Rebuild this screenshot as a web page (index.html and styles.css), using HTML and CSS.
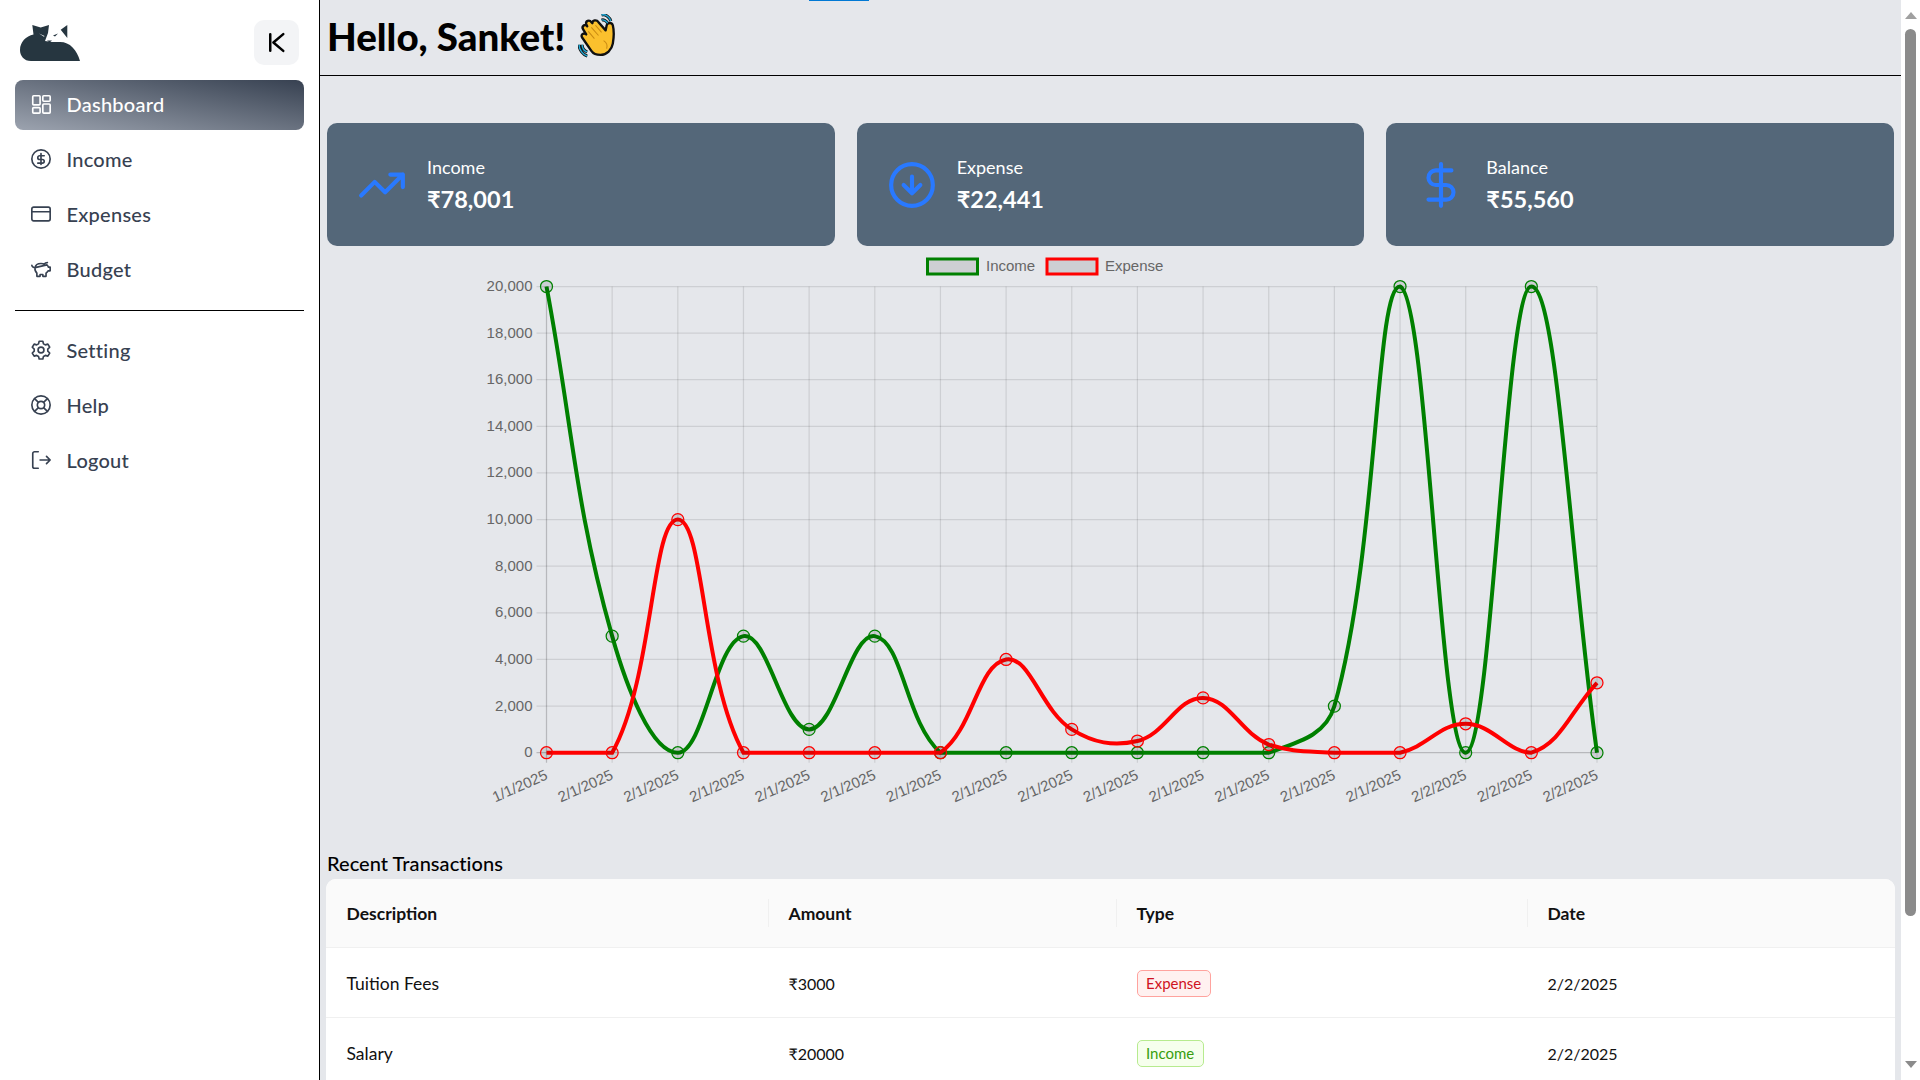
FILE: index.html
```html
<!DOCTYPE html>
<html lang="en">
<head>
<meta charset="utf-8">
<title>Dashboard</title>
<link rel="stylesheet" href="styles.css">
</head>
<body>
<aside class="sidebar">
  <div class="side-top">
    <svg class="logo" viewBox="0 0 60 36" aria-hidden="true">
      <path fill="#263640" d="M12.300 0L20.700 2.500 29 0 28 8 25 16 32 17H40C50 17 57 25 60 36H11C4 36 0 31 0 25 0 17 6 11 13.500 9.500Z"/>
      <path fill="#263640" d="M47.300 0L40.700 4.700 47.300 13ZM33 10.500L38 8.500 35 11.500ZM27 15.500H32L29.500 17.500Z"/>
      <path fill="#fff" d="M19 8.500L24.500 11 24 11.800Z"/>
    </svg>
    <button class="collapse" type="button" aria-label="Collapse">
      <svg class="i24" viewBox="0 0 24 24"><path d="M6 4v16M18.500 4L9 12l9.500 8"/></svg>
    </button>
  </div>
  <nav class="nav">
    <a class="nav-item active"><svg class="nav-icon" viewBox="0 0 24 24"><rect x="3" y="3" width="8" height="10" rx="1"/><rect x="14" y="3" width="8" height="6" rx="1"/><rect x="3" y="16" width="8" height="6" rx="1"/><rect x="14" y="12" width="8" height="10" rx="1"/></svg>Dashboard</a>
    <a class="nav-item"><svg class="nav-icon" viewBox="0 0 24 24"><circle cx="12" cy="12" r="10"/><path d="M15.500 8.500h-5a2 2 0 0 0 0 4h3a2 2 0 0 1 0 4h-5M12 6v12"/></svg>Income</a>
    <a class="nav-item"><svg class="nav-icon" viewBox="0 0 24 24"><rect x="2" y="4.500" width="20" height="15" rx="2"/><path d="M2 9.500h20"/></svg>Expenses</a>
    <a class="nav-item"><svg class="nav-icon" viewBox="0 0 24 24"><path d="M19 5c-1.500 0-2.800.6-3.500 1.500C14.500 6 13.300 6 12 6 9 6 6 7.500 5.500 10.500c-1.500 0-3.500-1-3.500-2.500M5.500 10.500C5 13 6 15 7.500 16.500V20h3.500v-2h3v2h3.500v-3.500c1-.8 1.800-1.700 2.200-2.500H22v-4h-2c-.2-1-.8-2-1.500-2.500z"/></svg>Budget</a>
    <hr class="nav-rule">
    <a class="nav-item"><svg class="nav-icon" viewBox="0 0 24 24"><path d="M10 2.500h4l.7 2.800 2 1.100 2.800-.8 2 3.400-2.100 2 0 2.300 2.100 2-2 3.400-2.800-.8-2 1.100-.7 2.800h-4l-.7-2.800-2-1.100-2.800.8-2-3.400 2.100-2 0-2.300-2.100-2 2-3.400 2.800.8 2-1.100z"/><circle cx="12" cy="12" r="3.200"/></svg>Setting</a>
    <a class="nav-item"><svg class="nav-icon" viewBox="0 0 24 24"><circle cx="12" cy="12" r="10"/><circle cx="12" cy="12" r="4"/><path d="M5 5l4.200 4.200M19 5l-4.200 4.200M5 19l4.200-4.200M19 19l-4.200-4.200"/></svg>Help</a>
    <a class="nav-item"><svg class="nav-icon" viewBox="0 0 24 24"><path d="M9 3H5a2 2 0 0 0-2 2v14a2 2 0 0 0 2 2h4M11 12h11M18 8l4 4-4 4"/></svg>Logout</a>
  </nav>
</aside>

<main class="main">
  <div class="tab-mark"></div>
  <header class="page-head">
    <h1 class="greeting">Hello, Sanket!</h1>
    <svg class="wave" viewBox="7 7 40 44" aria-hidden="true">
      <path fill="#fbc02d" stroke="#111" stroke-width="2.300" stroke-linejoin="round" d="M20 43L11 30c-2-3 2-5 4-3l-3-5c-2-3 2-6 4-3l-1-2c-1-3 3-5 5-2l1 1c0-3 4-4 6-1l7 8 1-5c1-3 5-3 6 0 1 4 1 12 0 18-1 6-6 11-12 11-5 0-7-1-9-4z"/>
      <path fill="none" stroke="#c98a12" stroke-width="1" d="M17 24l6 7M20 20l7 8M24 18l6 7M35 41c1-3 0-6-3-8"/>
      <path fill="none" stroke="#111" stroke-width="3" d="M30 13c2-1 5 1 6 3M30 8c4-1 8 2 9 6M11 37c0 3 2 6 5 7M8 37c0 5 4 10 8 11"/>
      <path fill="none" stroke="#23a9d6" stroke-width="1.400" d="M30 13c2-1 5 1 6 3M30 8c4-1 8 2 9 6M11 37c0 3 2 6 5 7M8 37c0 5 4 10 8 11"/>
    </svg>
  </header>

  <section class="cards">
    <article class="card">
      <svg class="card-icon" viewBox="0 0 24 24"><path d="M22 7l-8.500 8.500-5-5L2 17M16 7h6v6"/></svg>
      <div class="card-text"><span class="card-label">Income</span><strong class="card-value">₹78,001</strong></div>
    </article>
    <article class="card">
      <svg class="card-icon" viewBox="0 0 24 24"><circle cx="12" cy="12" r="10"/><path d="M8 12l4 4 4-4M12 8v8"/></svg>
      <div class="card-text"><span class="card-label">Expense</span><strong class="card-value">₹22,441</strong></div>
    </article>
    <article class="card">
      <svg class="card-icon" viewBox="0 0 24 24"><path d="M12 2v20M17 5H9.500a3.500 3.500 0 0 0 0 7h5a3.500 3.500 0 0 1 0 7H6"/></svg>
      <div class="card-text"><span class="card-label">Balance</span><strong class="card-value">₹55,560</strong></div>
    </article>
  </section>

  <div class="chart-wrap"><svg id="chart" class="chart" width="1574" height="590" viewBox="0 0 1574 590"></svg></div>

  <h2 class="section-title">Recent Transactions</h2>
  <div class="table-wrap">
    <table class="table">
      <colgroup><col class="c1"><col class="c2"><col class="c3"><col class="c4"></colgroup>
      <thead><tr><th>Description</th><th>Amount</th><th>Type</th><th>Date</th></tr></thead>
      <tbody>
        <tr><td>Tuition Fees</td><td class="num">₹3000</td><td><span class="tag tag-exp">Expense</span></td><td class="num">2/2/2025</td></tr>
        <tr><td>Salary</td><td class="num">₹20000</td><td><span class="tag tag-inc">Income</span></td><td class="num">2/2/2025</td></tr>
      </tbody>
    </table>
  </div>
</main>

<div class="scrollbar" aria-hidden="true">
  <span class="arrow-up"></span>
  <span class="thumb"></span>
  <span class="arrow-down"></span>
</div>
<script src="chart.js"></script>
</body>
</html>
```
FILE: styles.css
```css
* { box-sizing: border-box; }
html, body { height: 100%; margin: 0; }
body {
  display: flex;
  overflow: hidden;
  background: #fff;
  font-family: Lato, "Noto Sans", "Liberation Sans", sans-serif;
  color: #111;
}
.sidebar {
  flex: 0 0 320px;
  height: 1080px;
  padding: 20px 15px 0 15px;
  background: #fff;
  border-right: 1px solid #000;
}
.side-top {
  display: flex;
  justify-content: space-between;
  align-items: center;
  height: 45px;
  padding: 0 5px;
}
.logo { width: 60px; height: 36px; margin-top: 1px; }
.collapse {
  display: flex;
  align-items: center;
  justify-content: center;
  width: 45px;
  height: 45px;
  padding: 0;
  border: 0;
  border-radius: 10px;
  background: #f3f4f6;
}
.i24 { width: 25px; height: 25px; fill: none; stroke: #000; stroke-width: 2.400; stroke-linecap: round; stroke-linejoin: round; }
.nav { display: flex; flex-direction: column; gap: 5px; margin-top: 15px; }
.nav-item {
  display: flex;
  align-items: center;
  gap: 14.500px;
  height: 50px;
  padding: 0 0 2px 15px;
  border-radius: 8px;
  font-size: 20px;
  font-weight: 500;
  letter-spacing: 0.25px;
  color: #374151;
}
.nav-item.active {
  background: linear-gradient(to top right, #9ca3af, #374151);
  color: #fff;
}
.nav-icon { flex: none; width: 22px; height: 22px; fill: none; stroke: currentColor; stroke-width: 1.800; stroke-linecap: round; stroke-linejoin: round; }
.nav-rule { width: 100%; height: 1px; margin: 10px 0 10px; border: 0; background: #000; }

.main {
  position: relative;
  flex: 0 0 1581px;
  height: 1080px;
  padding: 0 7px;
  overflow: hidden;
  background: #e5e7eb;
}
.tab-mark { position: absolute; left: 489px; top: 0; width: 60px; height: 1px; background: #0078d4; }
.page-head {
  display: flex;
  align-items: center;
  gap: 13px;
  height: 76px;
  margin: 0 -7px;
  padding: 0 7px 2px 7px;
  border-bottom: 1px solid #000;
}
.greeting { margin: 0; font-size: 38.500px; font-weight: 900; line-height: 1; color: #000; }
.wave { width: 41px; height: 45px; }
.cards {
  display: grid;
  grid-template-columns: repeat(3, 1fr);
  gap: 22px;
  margin-top: 47px;
}
.card {
  display: flex;
  align-items: center;
  gap: 20px;
  height: 123px;
  padding-left: 30px;
  border-radius: 10px;
  background: #546779;
  color: #fff;
}
.card-icon { flex: none; width: 50px; height: 50px; fill: none; stroke: #2979ff; stroke-width: 2; stroke-linecap: round; stroke-linejoin: round; }
.card-text { display: flex; flex-direction: column; gap: 4px; }
.card-label { font-size: 18px; line-height: 24px; }
.card-value { font-size: 23.500px; line-height: 32px; font-weight: 700; }
.chart-wrap { height: 590px; margin-top: 4px; }
.chart { display: block; }
.chart text { font-family: "Liberation Sans", Arial, sans-serif; font-size: 15px; fill: #666; }
.section-title { margin: 8px 0 0; font-size: 20px; font-weight: 500; line-height: 30px; letter-spacing: 0.05px; color: #000; }
.table-wrap {
  width: 1569px;
  margin: 1px 0 0 -1px;
  border-radius: 10px 10px 0 0;
  overflow: hidden;
  background: #fff;
}
.table { width: 100%; table-layout: fixed; border-collapse: collapse; font-size: 17.500px; }
.c1 { width: 442px; }
.c2 { width: 348px; }
.c3 { width: 411px; }
.c4 { width: 368px; }
.table th {
  position: relative;
  height: 68px;
  padding: 1px 20px 0 20.500px;
  text-align: left;
  font-weight: 700;
  background: #fafafa;
  border-bottom: 1px solid #f0f0f0;
}
.table th + th::before {
  content: "";
  position: absolute;
  left: 0;
  top: 20px;
  width: 1px;
  height: 28px;
  background: #f0f0f0;
}
.table td { height: 70px; padding: 2px 20px 0 20.500px; border-bottom: 1px solid #f0f0f0; }
.table td.num { font-size: 16px; padding-top: 3px; }
.tag {
  display: inline-block;
  height: 27px;
  padding: 0 8.500px;
  border: 1px solid;
  border-radius: 5px;
  font-size: 15px;
  line-height: 25px;
}
.tag-exp { color: #cf1322; background: #fff1f0; border-color: #ffa39e; }
.tag-inc { color: #389e0d; background: #f6ffed; border-color: #b7eb8f; }

.scrollbar {
  display: flex;
  flex-direction: column;
  align-items: center;
  flex: 1 1 auto;
  height: 1080px;
  background: #fff;
}
.arrow-up { width: 0; height: 0; margin-top: 12px; border: 6.500px solid transparent; border-top: 0; border-bottom: 7px solid #a0a0a0; }
.thumb { width: 11px; height: 887px; margin-top: 10px; border-radius: 6px; background: #8b8b8b; }
.arrow-down { width: 0; height: 0; margin-top: 145px; border: 6.500px solid transparent; border-bottom: 0; border-top: 7px solid #8b8b8b; }
```
FILE: chart.js
```js
(function () {
  var NS = 'http://www.w3.org/2000/svg';
  var svg = document.getElementById('chart');
  // page position of the svg's origin
  var OX = 327, OY = 250;
  var area = { left: 546.5 - OX, right: 1597 - OX, top: 286.5 - OY, bottom: 752.7 - OY };
  var labels = ['1/1/2025'];
  var i;
  for (i = 0; i < 13; i++) labels.push('2/1/2025');
  for (i = 0; i < 3; i++) labels.push('2/2/2025');
  var income = [20000, 5000, 0, 5000, 1000, 5000, 0, 0, 0, 0, 0, 0, 2000, 20000, 0, 20000, 0];
  var expense = [0, 0, 10000, 0, 0, 0, 0, 4000, 1000, 500, 2350, 350, 0, 0, 1241, 0, 3000];
  var n = labels.length;
  var stepX = (area.right - area.left) / (n - 1);

  function el(name, attrs, text) {
    var e = document.createElementNS(NS, name);
    for (var k in attrs) e.setAttribute(k, attrs[k]);
    if (text) e.textContent = text;
    svg.appendChild(e);
    return e;
  }
  function X(k) { return area.left + k * stepX; }
  function Y(v) { return area.bottom - (v / 20000) * (area.bottom - area.top); }
  function fmt(v) { return String(v).replace(/\B(?=(\d{3})+$)/g, ','); }

  // grid and tick labels
  var grid = 'rgba(0,0,0,0.1)', axis = 'rgba(0,0,0,0.2)';
  for (i = 0; i < n; i++) {
    el('line', { x1: X(i), x2: X(i), y1: area.top, y2: area.bottom + 10, stroke: i === 0 ? axis : grid, 'stroke-width': 1.25 });
    el('text', { 'text-anchor': 'end', transform: 'translate(' + (X(i) + 2) + ',' + (area.bottom + 26) + ') rotate(-24)' }, labels[i]);
  }
  for (var v = 0; v <= 20000; v += 2000) {
    el('line', { x1: area.left - 10, x2: area.right, y1: Y(v), y2: Y(v), stroke: v === 0 ? axis : grid, 'stroke-width': 1.25 });
    el('text', { 'text-anchor': 'end', x: area.left - 14, y: Y(v) + 4.5 }, fmt(v));
  }

  // legend
  function legend(x, color, tx, label) {
    el('rect', { x: x - OX, y: 259 - OY, width: 50, height: 15, fill: 'rgba(0,0,0,0.1)', stroke: color, 'stroke-width': 3 });
    el('text', { x: tx - OX, y: 271 - OY }, label);
  }
  legend(927.5, 'green', 986, 'Income');
  legend(1047, 'red', 1105, 'Expense');

  // Chart.js style bezier (tension 0.4), control points capped to the plot area
  function clamp(a, lo, hi) { return Math.max(lo, Math.min(hi, a)); }
  function series(data, color) {
    var pts = data.map(function (d, k) { return { x: X(k), y: Y(d) }; });
    var t = 0.4;
    pts.forEach(function (p, k) {
      var a = pts[k - 1] || p, b = pts[k + 1] || p;
      var d01 = Math.hypot(p.x - a.x, p.y - a.y), d12 = Math.hypot(b.x - p.x, b.y - p.y);
      var s = d01 + d12 || 1;
      var fa = t * d01 / s, fb = t * d12 / s;
      p.c1x = clamp(p.x - fa * (b.x - a.x), area.left, area.right);
      p.c1y = clamp(p.y - fa * (b.y - a.y), area.top, area.bottom);
      p.c2x = clamp(p.x + fb * (b.x - a.x), area.left, area.right);
      p.c2y = clamp(p.y + fb * (b.y - a.y), area.top, area.bottom);
    });
    var d = 'M' + pts[0].x + ' ' + pts[0].y;
    for (var k = 1; k < n; k++) {
      d += 'C' + pts[k - 1].c2x + ' ' + pts[k - 1].c2y + ' ' + pts[k].c1x + ' ' + pts[k].c1y + ' ' + pts[k].x + ' ' + pts[k].y;
    }
    el('path', { d: d, fill: 'none', stroke: color, 'stroke-width': 4 });
    pts.forEach(function (p) {
      el('circle', { cx: p.x, cy: p.y, r: 6, fill: 'rgba(0,0,0,0.1)', stroke: color, 'stroke-width': 1.25 });
    });
  }
  series(income, 'green');
  series(expense, 'red');
})();
```
